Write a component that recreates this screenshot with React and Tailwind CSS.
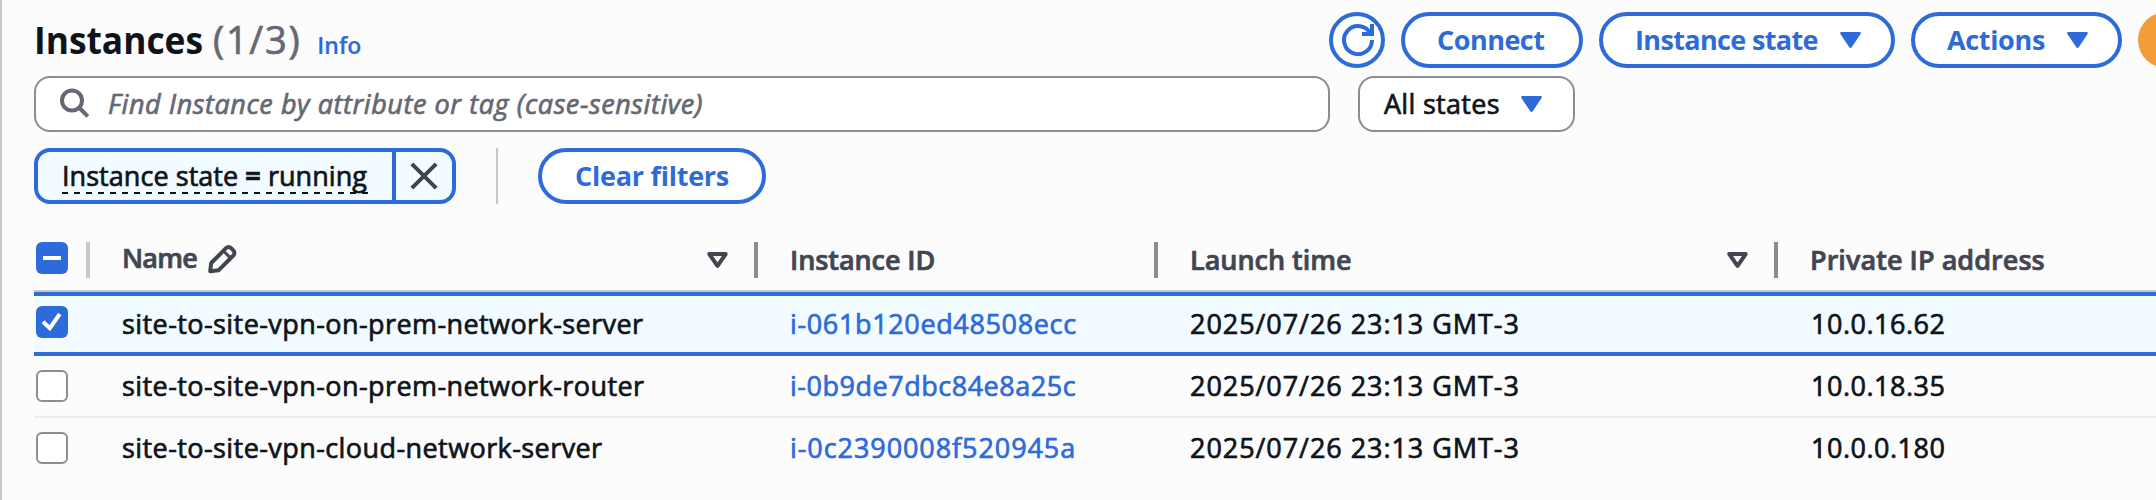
import React from 'react';

const rows = [
  { name: 'site-to-site-vpn-on-prem-network-server', id: 'i-061b120ed48508ecc', time: '2025/07/26 23:13 GMT-3', ip: '10.0.16.62', selected: true },
  { name: 'site-to-site-vpn-on-prem-network-router', id: 'i-0b9de7dbc84e8a25c', time: '2025/07/26 23:13 GMT-3', ip: '10.0.18.35' },
  { name: 'site-to-site-vpn-cloud-network-server', id: 'i-0c2390008f520945a', time: '2025/07/26 23:13 GMT-3', ip: '10.0.0.180' },
];

const idTracking = ['tracking-[0.640px]', 'tracking-[0.520px]', 'tracking-[0.920px]'];

function Caret() {
  return (
    <svg className="h-4 w-[21px] shrink-0 fill-[#2d6bda]" viewBox="0 0 21 16">
      <path d="M1.4 0h18.2c1.1 0 1.6 1.2 1 2.100L11.700 15.300c-.6.9-1.800.9-2.400 0L.4 2.100C-.2 1.200.3 0 1.400 0z" />
    </svg>
  );
}

function SortIcon() {
  return (
    <svg className="h-4 w-[21px] shrink-0" viewBox="0 0 21 16" fill="none" stroke="#424650" strokeWidth="4" strokeLinejoin="round">
      <path d="M2.300 2h16.400L10.500 13.800z" />
    </svg>
  );
}

function PillButton({ className, children }) {
  return (
    <button className={`flex h-14 shrink-0 items-center rounded-full border-4 border-[#2d6bda] bg-white font-bold text-[#2d6bda] [-webkit-text-stroke:0px] ${className}`}>
      {children}
    </button>
  );
}

function Checkbox({ checked, indeterminate }) {
  if (!checked && !indeterminate) {
    return <span className="block size-8 rounded-[6px] border-2 border-[#8c8c94] bg-white" />;
  }
  return (
    <svg className="block size-8 rounded-[6px] bg-[#2d6bda]" viewBox="0 0 32 32" fill="none" stroke="#fff" strokeWidth="4">
      <path d={indeterminate ? 'M7 16h18' : 'M7 15.800l6.800 6.400L23.800 8'} />
    </svg>
  );
}

function HeaderCell({ children, sortable, divider, className = '' }) {
  return (
    <div className={`flex h-9 items-center justify-between pl-8 ${divider ? 'border-r-4 border-[#8c8c94]' : ''} ${className}`}>
      <div className="flex items-center">{children}</div>
      {sortable && <SortIcon />}
    </div>
  );
}

const grid = 'grid grid-cols-[56px_668px_400px_620px_378px]';

export default function App() {
  return (
    <main className="h-[500px] w-[2156px] overflow-hidden border-l-2 border-[#c6c6cd] bg-[#fcfcfd] pl-8 font-['Open_Sans','Noto_Sans',sans-serif] text-[27px] leading-9 font-normal whitespace-nowrap text-[#0f141a] [-webkit-text-stroke:0.7px]">
      <header className="flex h-[68px] items-end">
        <div className="flex h-14 w-[1295px] shrink-0 items-baseline">
          <h1 className="w-[179px] text-[38px] leading-[55px] font-bold [-webkit-text-stroke:0px]">
            <span className="inline-block origin-left scale-x-[0.93]">Instances</span>
          </h1>
          <span className="text-[38px] leading-[55px] tracking-[1.700px] text-[#656871]">(1/3)</span>
          <a className="ml-4 text-[23px] font-semibold text-[#2d6bda] [-webkit-text-stroke:0.2px]">Info</a>
        </div>
        <div className="flex gap-4">
          <PillButton className="w-14 justify-center">
            <svg className="ml-0.5 size-8 shrink-0" viewBox="0 0 16 16" fill="none" stroke="#2d6bda" strokeWidth="2">
              <path d="M10 5h5V0" />
              <path d="M15 8a7 7 0 1 1-.700-3" />
            </svg>
          </PillButton>
          <PillButton className="w-[182px] pl-[32px]"><span className="tracking-[-0.500px]">Connect</span></PillButton>
          <PillButton className="w-[296px] justify-between pr-[30px] pl-[32px]"><span className="tracking-[-0.650px]">Instance state</span><Caret /></PillButton>
          <PillButton className="w-[211px] justify-between pr-[30px] pl-[32px]"><span className="tracking-[-0.340px]">Actions</span><Caret /></PillButton>
          <button className="h-14 w-40 shrink-0 rounded-full bg-[#f29d38]" aria-label="Launch instances" />
        </div>
      </header>

      <section className="mt-2 flex gap-7">
        <div className="flex h-14 w-[1296px] shrink-0 items-center rounded-[16px] border-2 border-[#8c8c94] bg-white pl-6">
          <svg className="h-8 w-8 shrink-0" viewBox="0 0 32 32" fill="none" stroke="#656871" strokeWidth="4">
            <circle cx="12" cy="12.500" r="10" />
            <path d="M19 19.500l8.800 8.800" />
          </svg>
          <span className="ml-4 tracking-[0.580px] text-[#656871] italic">Find Instance by attribute or tag (case-sensitive)</span>
        </div>
        <div className="flex h-14 w-[217px] shrink-0 items-center justify-between rounded-[16px] border-2 border-[#8c8c94] bg-white pr-[31px] pl-6">
          <span className="tracking-[0.300px]">All states</span>
          <Caret />
        </div>
      </section>

      <section className="mt-4 flex h-14">
        <div className="flex w-[422px] shrink-0 overflow-hidden rounded-[16px] border-4 border-[#2d6bda] bg-[#f2fbff]">
          <div className="flex w-[358px] items-center border-r-4 border-[#2d6bda] pl-6">
            <span className="relative">
              <span className="tracking-[0.050px]">Instance state <b>=</b> running</span>
              <svg className="absolute top-[34px] left-0 h-0.5 w-[306px]" viewBox="0 0 306 2"><path d="M0 1h306" stroke="#0f141a" strokeWidth="2" strokeDasharray="6 6" /></svg>
            </span>
          </div>
          <div className="flex w-14 items-center justify-center">
            <svg className="size-7" viewBox="0 0 28 28" fill="none" stroke="#424650" strokeWidth="4"><path d="M1.800 1.800l24.400 24.400M26.200 1.800L1.800 26.200" /></svg>
          </div>
        </div>
        <div className="mx-10 w-0.5 shrink-0 bg-[#c6c6cd]" />
        <PillButton className="w-[228px] pl-[33px]"><span className="tracking-[-0.250px]">Clear filters</span></PillButton>
      </section>

      <section>
        <div className={`${grid} mt-[38px] h-12 font-semibold text-[#424650]`}>
          <div className="flex h-9 w-14 justify-between border-r-4 border-[#c6c6cd] pl-0.5"><Checkbox indeterminate /></div>
          <HeaderCell sortable divider className="pr-[26px]">
            <span className="-mt-1 tracking-[-0.790px]">Name</span>
            <svg className="-mt-px ml-[11px] size-[29px]" viewBox="0 0 29 29" fill="none" stroke="#424650" strokeWidth="4" strokeLinejoin="round">
              <path d="M2.200 26.300l1-8.300L18 3.200c1.500-1.500 3.600-1.500 5.100 0l2.200 2.200c1.500 1.500 1.500 3.600 0 5.100L10.500 25.300z" />
              <path d="M15.500 6l7 7" strokeWidth="3" />
            </svg>
          </HeaderCell>
          <HeaderCell divider><span className="tracking-[-0.080px]">Instance ID</span></HeaderCell>
          <HeaderCell divider sortable className="pr-[26px]"><span className="tracking-[-0.020px]">Launch time</span></HeaderCell>
          <HeaderCell><span className="tracking-[0.060px]">Private IP address</span></HeaderCell>
        </div>
        <div className="h-0.5 bg-[#c6c6cd]" />
        {rows.map((r, i) => (
          <div key={r.id} className={`${grid} items-center ${r.selected ? 'h-16 border-y-4 border-[#2d6bda] bg-[#f2fbff]' : i === 1 ? 'h-[62px] border-b-2 border-[#ebebf0]' : 'h-[60px]'}`}>
            <div className={r.selected ? '-mt-1 pl-0.5' : 'pl-0.5'}><Checkbox checked={r.selected} /></div>
            <div className="pl-8 tracking-[0.420px]">{r.name}</div>
            <div className={`pl-8 text-[#2d6bda] ${idTracking[i]}`}>{r.id}</div>
            <div className="pl-8 tracking-[0.940px]">{r.time}</div>
            <div className="pl-[33px] tracking-[0.500px]">{r.ip}</div>
          </div>
        ))}
      </section>
    </main>
  );
}
